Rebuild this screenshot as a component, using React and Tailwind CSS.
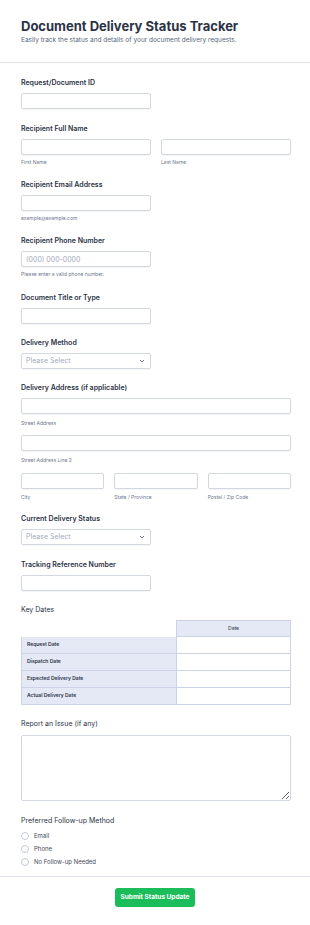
import React from "react";

const inputCls =
    "block h-[16px] rounded-[2px] border border-[#d3d7e2] bg-white shadow-[0_1px_1px_rgba(0,0,0,0.04)] outline-none";

const Label = ({ children, weight = "font-semibold" }) => (
    <div className={`text-[7px] leading-[10px] text-[#2c3345] ${weight} mb-[5px]`}>{children}</div>
);

const Sub = ({ children, className = "mt-[3px]" }) => (
    <div className={`text-[5px] leading-[8px] text-[#6f7890] ${className}`}>{children}</div>
);

const Select = () => (
    <div className={`${inputCls} w-[130px] flex items-center justify-between px-[4px]`}>
        <span className="text-[7px] text-[#a3aabb]">Please Select</span>
        <svg width="6" height="4" viewBox="0 0 6 4" className="mr-[1px]">
            <path d="M1 1l2 2 2-2" fill="none" stroke="#6f7890" strokeWidth="1" />
        </svg>
    </div>
);

const dates = ["Request Date", "Dispatch Date", "Expected Delivery Date", "Actual Delivery Date"];
const followUps = ["Email", "Phone", "No Follow-up Needed"];

export default function App() {
    return (
        <div className="w-[310px] min-h-[925px] bg-white font-['Inter',sans-serif]">
            <header className="px-[21px] pt-[18px] pb-[17px] border-b border-[#e1e4ea]">
                <h1 className="text-[13px] leading-[16px] font-bold text-[#2c3345]">
                    Document Delivery Status Tracker
                </h1>
                <p className="mt-[1px] text-[6.5px] leading-[10px] text-[#57647e]">
                    Easily track the status and details of your document delivery requests.
                </p>
            </header>

            <section className="pl-[21px] pr-[19px] pt-[15px] pb-[8px] border-b border-[#e1e4ea]">
                <div>
                    <Label>Request/Document ID</Label>
                    <input className={`${inputCls} w-[130px]`} />
                </div>

                <div className="mt-[15px]">
                    <Label>Recipient Full Name</Label>
                    <div className="grid grid-cols-2 gap-[10px]">
                        <div>
                            <input className={`${inputCls} w-full`} />
                            <Sub>First Name</Sub>
                        </div>
                        <div>
                            <input className={`${inputCls} w-full`} />
                            <Sub>Last Name</Sub>
                        </div>
                    </div>
                </div>

                <div className="mt-[14px]">
                    <Label>Recipient Email Address</Label>
                    <input className={`${inputCls} w-[130px]`} />
                    <Sub>example@example.com</Sub>
                </div>

                <div className="mt-[14px]">
                    <Label>Recipient Phone Number</Label>
                    <input
                        className={`${inputCls} w-[130px] px-[4px] text-[7px] placeholder:text-[#a3aabb]`}
                        placeholder="(000) 000-0000"
                    />
                    <Sub>Please enter a valid phone number.</Sub>
                </div>

                <div className="mt-[15px]">
                    <Label>Document Title or Type</Label>
                    <input className={`${inputCls} w-[130px]`} />
                </div>

                <div className="mt-[14px]">
                    <Label>Delivery Method</Label>
                    <Select />
                </div>

                <div className="mt-[14px]">
                    <Label>Delivery Address (if applicable)</Label>
                    <input className={`${inputCls} w-full`} />
                    <Sub className="mt-[5px]">Street Address</Sub>
                    <input className={`${inputCls} w-full mt-[8px]`} />
                    <Sub className="mt-[5px]">Street Address Line 2</Sub>
                    <div className="grid grid-cols-3 gap-[10px] mt-[9px]">
                        <div>
                            <input className={`${inputCls} w-full`} />
                            <Sub className="mt-[4px]">City</Sub>
                        </div>
                        <div>
                            <input className={`${inputCls} w-full`} />
                            <Sub className="mt-[4px]">State / Province</Sub>
                        </div>
                        <div>
                            <input className={`${inputCls} w-full`} />
                            <Sub className="mt-[4px]">Postal / Zip Code</Sub>
                        </div>
                    </div>
                </div>

                <div className="mt-[13px]">
                    <Label>Current Delivery Status</Label>
                    <Select />
                </div>

                <div className="mt-[15px]">
                    <Label>Tracking Reference Number</Label>
                    <input className={`${inputCls} w-[130px]`} />
                </div>

                <div className="mt-[14px]">
                    <Label weight="font-normal">Key Dates</Label>
                    <div className="grid grid-cols-[155px_115px] text-[5px] text-[#2c3345]">
                        <div className="h-[17px]" />
                        <div className="h-[17px] flex items-center justify-center bg-[#e5e9f5] border border-[#cdd3e6]">
                            Date
                        </div>
                        {dates.map((d) => (
                            <React.Fragment key={d}>
                                <div className="h-[17px] flex items-center pl-[5px] font-semibold bg-[#e5e9f5] border-l border-b border-[#cdd3e6]">
                                    {d}
                                </div>
                                <div className="h-[17px] bg-white border-x border-b border-[#cdd3e6]" />
                            </React.Fragment>
                        ))}
                    </div>
                </div>

                <div className="mt-[14px]">
                    <div className="text-[7px] leading-[10px] text-[#2c3345] mb-[6px]">Report an Issue (if any)</div>
                    <textarea className="block w-full h-[66px] rounded-[2px] border border-[#d3d7e2] bg-white outline-none" />
                </div>

                <div className="mt-[15px]">
                    <div className="text-[7px] leading-[10px] text-[#2c3345]">Preferred Follow-up Method</div>
                    <div className="mt-[3px]">
                        {followUps.map((f) => (
                            <label key={f} className="flex items-center h-[13px] gap-[5px]">
                                <span className="w-[8px] h-[8px] rounded-full border border-[#c3c9d6] bg-white" />
                                <span className="text-[6px] text-[#3f4759]">{f}</span>
                            </label>
                        ))}
                    </div>
                </div>
            </section>

            <div className="flex justify-center pt-[11px] pb-[17px]">
                <button className="w-[80px] h-[19px] rounded-[3px] bg-[#1bbd5b] text-white text-[6.5px] font-bold">
                    Submit Status Update
                </button>
            </div>
        </div>
    );
}
